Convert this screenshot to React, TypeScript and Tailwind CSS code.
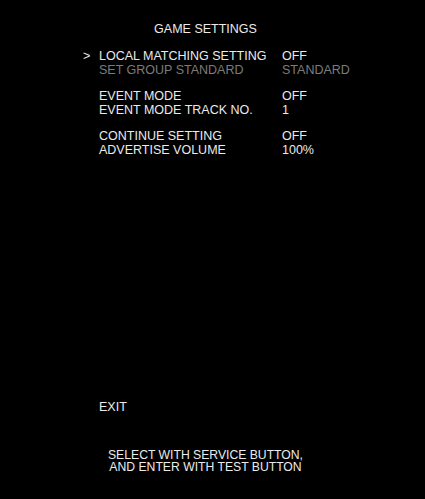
const groups: { label: string; value: string; dim?: boolean; cursor?: boolean }[][] = [
  [
    { label: "LOCAL MATCHING SETTING", value: "OFF", cursor: true },
    { label: "SET GROUP STANDARD", value: "STANDARD", dim: true },
  ],
  [
    { label: "EVENT MODE", value: "OFF" },
    { label: "EVENT MODE TRACK NO.", value: "1" },
  ],
  [
    { label: "CONTINUE SETTING", value: "OFF" },
    { label: "ADVERTISE VOLUME", value: "100%" },
  ],
];

export default function App() {
  return (
    <div
      className="w-[425px] h-[499px] bg-black text-[#ebebeb] text-[12.5px] leading-[14px] flex flex-col"
      style={{ fontFamily: '"Liberation Sans", Arial, sans-serif' }}
    >
      <div className="w-[411px] text-center pt-[22px]">GAME SETTINGS</div>

      <div className="pl-[83px] mt-[13px] flex flex-col gap-3">
        {groups.map((g, i) => (
          <div key={i} className="flex flex-col">
            {g.map((row) => (
              <div
                key={row.label}
                className={`grid grid-cols-[16px_183px_auto] ${row.dim ? "text-[#7c7c7c]" : ""}`}
              >
                <span>{row.cursor ? ">" : ""}</span>
                <span>{row.label}</span>
                <span>{row.value}</span>
              </div>
            ))}
          </div>
        ))}
      </div>

      <div className="pl-[99px] mt-auto">EXIT</div>

      <div className="w-[411px] text-center text-[12.2px] leading-[12px] mt-[35px] mb-[26px]">
        <div>SELECT WITH SERVICE BUTTON,</div>
        <div>AND ENTER WITH TEST BUTTON</div>
      </div>
    </div>
  );
}
